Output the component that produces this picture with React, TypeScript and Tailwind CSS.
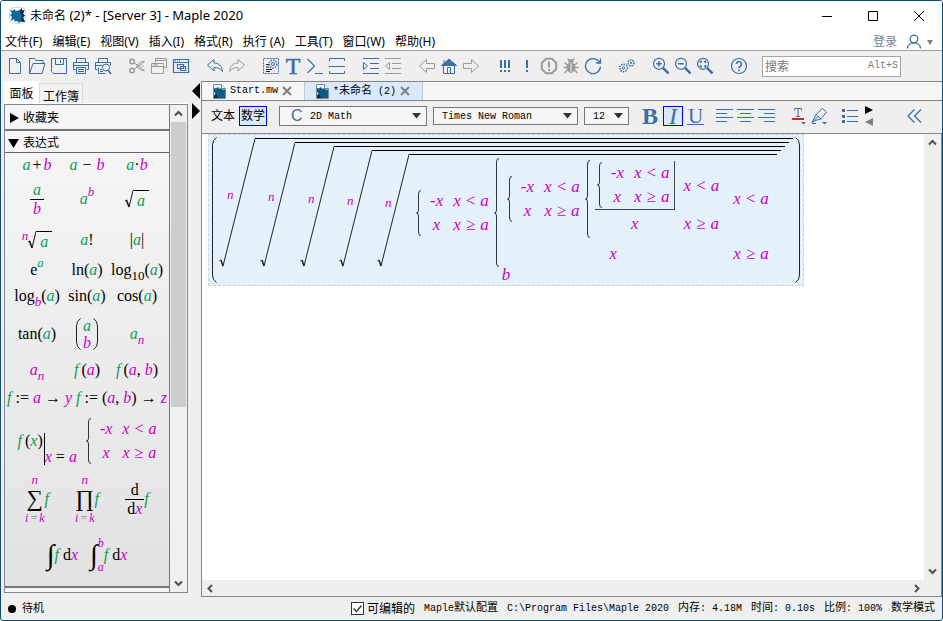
import React, { useState } from "react";
import type { ReactNode } from "react";

const BLUE = "#3a6ea5";
const GRAY = "#9a9a9a";

/* ---------- text helpers ---------- */

// Latin runs are set in a narrow mono face, Chinese runs one size up.
function Song({ children }: { children: string }) {
  return (
    <span className="block font-['Liberation_Mono','Noto_Sans_CJK_SC',monospace] text-[10px] leading-4 whitespace-pre">
      {children.split(/([\u4e00-\u9fff]+)/).map((part, i) =>
        i % 2 ? (
          <span key={i} className="text-[11px]">
            {part}
          </span>
        ) : (
          part
        )
      )}
    </span>
  );
}

const G = ({ children }: { children: ReactNode }) => (
  <i className="text-[#0f9d58]">{children}</i>
);
const M = ({ children }: { children: ReactNode }) => (
  <i className="text-[#c800c8]">{children}</i>
);

/* ---------- icons ---------- */

function Icon({ color = BLUE, children }: { color?: string; children: ReactNode }) {
  return (
    <svg width="18" height="18" viewBox="0 0 18 18" fill="none" stroke={color} strokeWidth="1">
      {children}
    </svg>
  );
}

const NewIcon = () => (
  <Icon>
    <path d="M3.500 1.500h7l4 4v11h-11zM10.500 1.500v4h4" />
  </Icon>
);
const OpenIcon = () => (
  <Icon>
    <path d="M1.500 16.500v-15h5l1.500 2h7v3M1.500 16.500l3.500-10h12l-3 10z" />
  </Icon>
);
const SaveIcon = () => (
  <Icon>
    <path d="M1.500 1.500h15v15h-13l-2-2zM5.500 1.500v6h8v-6M10.500 3v3" />
  </Icon>
);
const PrintIcon = () => (
  <Icon>
    <path d="M4.500 5.500v-4h9v4M3.500 12.500h-2v-7h15v7h-2M1.500 8.500h15M4.500 10.500h9v6h-9zM6 12.500h6M6 14.500h6" />
  </Icon>
);
const PreviewIcon = () => (
  <Icon>
    <path d="M4.500 5.500v-4h9v4M3.500 12.500h-2v-7h15v3M1.500 8.500h7M4.500 10.500v6h7M6 12.500h2M6 14.500h3" />
    <circle cx="12" cy="10.500" r="3.500" />
    <path d="M14.500 13.500l2.500 3.500" strokeWidth="1.600" />
  </Icon>
);
const CutIcon = () => (
  <Icon color={GRAY}>
    <circle cx="4" cy="4.500" r="2.300" strokeWidth="1.400" />
    <circle cx="4" cy="13.500" r="2.300" strokeWidth="1.400" />
    <path d="M6 5.500L16.500 13.500H14L8 9.500M6 12.500L16.500 4.500H14L8 8.500" />
    <path d="M11 9h6" strokeDasharray="1 1" />
  </Icon>
);
const CopyIcon = () => (
  <Icon color={GRAY}>
    <path d="M5.500 5.500v-4h11v9h-3M5.500 3.500h11M1.500 6.500h12v10h-12zM1.500 9.500h12M3 8h5" />
  </Icon>
);
const PasteIcon = () => (
  <Icon>
    <path d="M1.500 2.500h15v13h-15zM1.500 5.500h15M3 4h1M5 4h1M7 4h1M5.500 7.500h6v4h-6zM8.500 9.500h5v4h-5z" strokeWidth="1.200" />
  </Icon>
);
const UndoIcon = () => (
  <Icon>
    <path d="M1.500 8L8 2.500v3.500c5 0 8 3 8.500 8.500-2-3-4.500-4-8.500-4v3.500z" />
  </Icon>
);
const RedoIcon = () => (
  <Icon color={GRAY}>
    <path d="M16.500 8L10 2.500v3.500c-5 0-8 3-8.500 8.500 2-3 4.500-4 8.500-4v3.500z" />
  </Icon>
);
const RegionIcon = () => (
  <Icon>
    <rect x="1.500" y="1.500" width="15" height="15" strokeDasharray="2 1" />
    <circle cx="11" cy="7" r="3.800" strokeDasharray="1.500 1" strokeWidth="1.500" />
    <circle cx="11" cy="7" r="1.500" />
    <path d="M4 7.500h3M4 10h3M4 12.500h6M4 14.500h4" stroke="#222" />
  </Icon>
);
const PromptIcon = () => (
  <Icon>
    <path d="M1.500 2l7 7-7 7M9 16.500h8" strokeWidth="1.200" />
  </Icon>
);
const SectionIcon = () => (
  <Icon>
    <path d="M1.500 4v-2.500h15V4M1 9.500h16M1.500 14v2.500h15V14" />
  </Icon>
);
const IndentIcon = () => (
  <Icon>
    <path d="M1 1.500h16M8 6.500h9M8 11.500h9M1 16.500h16M1.500 5.500v7l4-3.500z" />
  </Icon>
);
const OutdentIcon = () => (
  <Icon color={GRAY}>
    <path d="M1 1.500h16M8 6.500h9M8 11.500h9M1 16.500h16M5.500 5.500v7L1.500 9z" />
  </Icon>
);
const BackIcon = () => (
  <Icon color={GRAY}>
    <path d="M1.500 9L8.500 2.500v4h8v5h-8v4z" />
  </Icon>
);
const ForwardIcon = () => (
  <Icon color={GRAY}>
    <path d="M16.500 9L9.500 2.500v4h-8v5h8v4z" />
  </Icon>
);
const HomeIcon = () => (
  <Icon>
    <path d="M1.500 8.500L9 2l7.500 6.500z" fill={BLUE} />
    <path d="M3.500 8.500v8h11v-8M7.500 16v-5.500h3V16M4 3v3" />
  </Icon>
);
const BangIcon = ({ xs }: { xs: number[] }) => (
  <Icon>
    {xs.map((x) => (
      <path key={x} d={`M${x} 3v8M${x} 13v2`} strokeWidth="2" />
    ))}
  </Icon>
);
const StopIcon = () => (
  <Icon color={GRAY}>
    <path d="M6 1.800h6L16.200 6v6L12 16.200H6L1.800 12V6z" strokeWidth="2" />
    <path d="M9 4.500v6M9 12v2" strokeWidth="2" />
  </Icon>
);
const BugIcon = () => (
  <Icon color={GRAY}>
    <ellipse cx="9" cy="10.500" rx="4" ry="5" fill={GRAY} />
    <path d="M6.500 4.500a2.500 2 0 015 0z" fill={GRAY} />
    <path d="M9 6v9.500" stroke="#efefef" />
    <path d="M5.500 8L2.500 5.500M12.500 8l3-2.500M5 10.500H1.500M13 10.500h3.500M5.500 13l-3 3M12.500 13l3 3M7 3L5.500 1.500M11 3l1.500-1.500" strokeWidth="1.300" />
  </Icon>
);
const RefreshIcon = () => (
  <Icon>
    <path d="M16.500 9.500a7.500 7.500 0 11-2.500-6l2 2M16.500 1.500v4.500h-4.500" strokeWidth="1.300" />
  </Icon>
);
const GearsIcon = () => (
  <Icon>
    <circle cx="5.500" cy="11" r="3.800" strokeDasharray="1.500 1" strokeWidth="1.400" />
    <circle cx="5.500" cy="11" r="1.200" />
    <circle cx="13" cy="6" r="3" strokeDasharray="1.500 1" strokeWidth="1.400" />
    <circle cx="13" cy="6" r=".8" />
  </Icon>
);
const MagnifierIcon = ({ d }: { d: string }) => (
  <Icon>
    <circle cx="7" cy="6.800" r="5.500" strokeWidth="1.200" />
    <path d="M11 10.800l5.500 5.500" strokeWidth="2.500" />
    <path d={d} strokeWidth="1.500" />
  </Icon>
);
const HelpIcon = () => (
  <Icon>
    <circle cx="9" cy="9" r="7.500" strokeWidth="1.200" />
    <path d="M6.500 7a2.500 2.500 0 113.800 2.200C9.300 9.800 9 10 9 11.300M9 12.500v1.800" strokeWidth="1.600" />
  </Icon>
);
const Serif = ({ children }: { children: ReactNode }) => (
  <span className="font-['Liberation_Serif',serif] text-[24px] leading-5 text-[#3a6ea5] [-webkit-text-stroke:0.5px]">
    {children}
  </span>
);

const toolGroups: [string, ReactNode][][] = [
  [
    ["New", <NewIcon />],
    ["Open", <OpenIcon />],
    ["Save", <SaveIcon />],
    ["Print", <PrintIcon />],
    ["Print preview", <PreviewIcon />],
  ],
  [
    ["Cut", <CutIcon />],
    ["Copy", <CopyIcon />],
    ["Paste", <PasteIcon />],
  ],
  [
    ["Undo", <UndoIcon />],
    ["Redo", <RedoIcon />],
  ],
  [
    ["Code edit region", <RegionIcon />],
    ["Text", <Serif>T</Serif>],
    ["Prompt", <PromptIcon />],
    ["Section", <SectionIcon />],
  ],
  [
    ["Indent", <IndentIcon />],
    ["Outdent", <OutdentIcon />],
  ],
  [
    ["Back", <BackIcon />],
    ["Home", <HomeIcon />],
    ["Forward", <ForwardIcon />],
  ],
  [
    ["Execute all", <BangIcon xs={[5, 9, 13]} />],
    ["Execute", <BangIcon xs={[9]} />],
    ["Interrupt", <StopIcon />],
    ["Debug", <BugIcon />],
    ["Restart", <RefreshIcon />],
  ],
  [["Startup code", <GearsIcon />]],
  [
    ["Zoom in", <MagnifierIcon d="M7 4v5.600M4.200 6.800h5.600" />],
    ["Zoom out", <MagnifierIcon d="M4.200 6.800h5.600" />],
    ["Zoom default", <MagnifierIcon d="M4.500 6V4.500H6M8 4.500h1.500V6M9.500 8v1.500H8M6 9.500H4.500V8" />],
  ],
  [["Help", <HelpIcon />]],
];

function MapleLogo() {
  return (
    <svg width="17" height="17" viewBox="0 0 17 17">
      <rect x=".5" y=".5" width="16" height="16" rx="4" fill="#fff" stroke="#d0d6da" />
      <path
        d="M1 3l3 .8L5 2l2 2 2.500-.5L13 1v2.500l2.500-.5L14 7l2 1.500-2 2 2 4.500-4-.5L10 16l-2-2-3 .5.500-2.500L1.500 14 3 10 1 8l2-1.500z"
        fill="#0f6a99"
      />
      <path d="M13 1v2.500l2.500-.5L14 7l2 1.500-2 2 2 4.500-4-.5L13 9l-2-4z" fill="#0a2c45" />
    </svg>
  );
}

function WorksheetIcon() {
  return (
    <svg width="13" height="15" viewBox="0 0 13 15">
      <path d="M.5.500h8l4 4v10H.5z" fill="#eef3f6" stroke="#7d8890" />
      <path d="M8.500.500v4h4" fill="#fff" stroke="#7d8890" />
      <path d="M1 4l2 .5L5 3l1.500 2L8 4l1 1.500h3V14H1v-3l1.500-1.500L1 8z" fill="#0b5b86" />
      <path d="M1 14v-2.500l2.500-1L5 14z" fill="#0a2c45" />
    </svg>
  );
}

function CloseX() {
  return (
    <svg width="10" height="10" viewBox="0 0 10 10" stroke="#808080" strokeWidth="2">
      <path d="M1 1l8 8M9 1L1 9" />
    </svg>
  );
}

function Chevron({ d }: { d: string }) {
  return (
    <svg width="9" height="9" viewBox="0 0 9 9" fill="none" stroke="#505050" strokeWidth="2">
      <path d={d} />
    </svg>
  );
}
const UP = "M1 6.500l3.500-3.500 3.500 3.500";
const DOWN = "M1 2.500l3.500 3.500 3.500-3.500";
const LEFT = "M6 1L2.500 4.500 6 8";
const RIGHT = "M3 1l3.500 3.500L3 8";

/* ---------- math ---------- */

function Brace({ h }: { h: number }) {
  const m = Math.round(h / 2);
  return (
    <svg className="shrink-0" width="5" height={h} fill="none" stroke="#333">
      <path
        d={`M5 .5Q2.500 .5 2.500 4V${m - 3}Q2.500 ${m} .5 ${m}Q2.500 ${m} 2.500 ${m + 3}V${h - 4}Q2.500 ${h - 0.5} 5 ${h - 0.5}`}
      />
    </svg>
  );
}

function Paren({ h, flip = false, r = 8 }: { h: number; flip?: boolean; r?: number }) {
  return (
    <svg className={`shrink-0 ${flip ? "-scale-x-100" : ""}`} width="5" height={h} fill="none" stroke="#222">
      <path d={`M4.500 .5Q.5 3 .5 ${r}V${h - r}Q.5 ${h - 3} 4.500 ${h - 0.5}`} />
    </svg>
  );
}

function Cond({ op }: { op: string }) {
  return (
    <span className="flex gap-[5px] text-[#c800c8]">
      <i>x</i>
      <span>{op}</span>
      <i>a</i>
    </span>
  );
}

function SimplePiecewise() {
  return (
    <span className="flex items-center gap-[9px]">
      <Brace h={46} />
      <span className="grid grid-cols-[auto_auto] justify-items-center gap-x-[10px] leading-6">
        <M>-x</M>
        <Cond op="<" />
        <M>x</M>
        <Cond op="≥" />
      </span>
    </span>
  );
}

// A tall n-th root; each level inside is one pixel narrower and four shorter.
function Root({ level, children }: { level: number; children: ReactNode }) {
  const w = 36 - level;
  const h = 129 - level * 4;
  return (
    <div className="flex">
      <div className="grid shrink-0">
        <svg className="[grid-area:1/1]" width={w} height={h} fill="none" stroke="#222">
          <path d={`M.5 ${h - 6}l1.500 -1`} />
          <path d={`M2 ${h - 7}l2 6`} strokeWidth="1.500" />
          <path d={`M4 ${h - 1}L${w} .5`} />
        </svg>
        <i className="[grid-area:1/1] self-center pb-4 pl-2 text-[13px] leading-4 text-[#c800c8]">n</i>
      </div>
      <div className="border-t border-black pt-[3px] pr-1 pl-[5px]">{children}</div>
    </div>
  );
}

function DocumentExpression() {
  return (
    <div className="flex w-fit gap-[2px] border border-dashed border-[#ccd6de] bg-[#e4f1fb] px-[3px] py-[2px] font-['Liberation_Serif',serif] text-[17px]">
      <Paren h={146} />
      <div className="flex flex-col items-center pt-px">
        <Root level={0}>
          <Root level={1}>
            <Root level={2}>
              <Root level={3}>
                <Root level={4}>
                  <div className="flex items-center gap-[5px] pr-1 pl-[2px]">
                    <SimplePiecewise />
                    <div className="flex items-center gap-2">
                      <Brace h={109} />
                      <div className="grid grid-cols-[auto_auto] items-center justify-items-center gap-x-[14px] gap-y-1 leading-6">
                        <div className="flex items-center gap-[5px]">
                          <SimplePiecewise />
                          <Brace h={78} />
                          <div className="grid grid-cols-[auto_auto] items-center justify-items-center gap-x-[9px] gap-y-[2px]">
                            <div className="border-r border-b border-[#444] pr-1 pl-[2px]">
                              <SimplePiecewise />
                            </div>
                            <Cond op="<" />
                            <M>x</M>
                            <Cond op="≥" />
                          </div>
                        </div>
                        <Cond op="<" />
                        <M>x</M>
                        <Cond op="≥" />
                      </div>
                    </div>
                  </div>
                </Root>
              </Root>
            </Root>
          </Root>
        </Root>
        <span className="leading-4">
          <M>b</M>
        </span>
      </div>
      <Paren h={146} flip />
    </div>
  );
}

function SqrtA({ index }: { index?: string }) {
  return (
    <span className="flex items-end">
      {index && <i className="self-start text-[13px] leading-[10px] text-[#c800c8]">{index}</i>}
      <svg width="8" height="18" fill="none" stroke="#111">
        <path d="M0 11l1.500 -1" />
        <path d="M1.500 10l2.500 7" strokeWidth="1.500" />
        <path d="M4 17L8 .5" />
      </svg>
      <span className="h-[18px] border-t border-black px-1 leading-[19px]">
        <G>a</G>
      </span>
    </span>
  );
}

function BigOp({ sign }: { sign: string }) {
  return (
    <span className="flex items-center">
      <span className="flex flex-col items-center">
        <i className="text-[13px] leading-[13px] text-[#c800c8]">n</i>
        <span className="text-[23px] leading-[26px]">{sign}</span>
        <span className="flex gap-[2px] text-[12px] leading-[13px]">
          <M>i</M>
          <span className="text-[#888]">=</span>
          <M>k</M>
        </span>
      </span>
      <G>f</G>
    </span>
  );
}

const Sub = ({ children }: { children: ReactNode }) => (
  <span className="relative top-[5px] text-[13px]">{children}</span>
);
const Sup = ({ children }: { children: ReactNode }) => (
  <span className="relative -top-2 text-[13px]">{children}</span>
);
// function name with the wider side bearing it gets before a parenthesis
const Fn = () => <i className="mr-[3px] text-[#0f9d58]">f</i>;

const paletteRows: { row: string; cell: string; items: ReactNode[] }[] = [
  {
    row: "h-[23px]",
    cell: "w-[50px]",
    items: [
      <span className="flex gap-[2px]"><G>a</G><span>+</span><M>b</M></span>,
      <span className="flex gap-[5px]"><G>a</G><span>−</span><M>b</M></span>,
      <span><G>a</G>·<M>b</M></span>,
    ],
  },
  {
    row: "h-[46px]",
    cell: "w-[50px]",
    items: [
      <span className="flex w-[14px] flex-col leading-[18px]">
        <span className="border-b border-black"><G>a</G></span>
        <M>b</M>
      </span>,
      <span><G>a</G><Sup><M>b</M></Sup></span>,
      <SqrtA />,
    ],
  },
  {
    row: "h-[35px]",
    cell: "w-[50px]",
    items: [<SqrtA index="n" />, <span><G>a</G>!</span>, <span>|<G>a</G>|</span>],
  },
  {
    row: "h-[25px]",
    cell: "w-[50px]",
    items: [
      <span>e<Sup><G>a</G></Sup></span>,
      <span>ln(<G>a</G>)</span>,
      <span>log<Sub>10</Sub>(<G>a</G>)</span>,
    ],
  },
  {
    row: "h-[28px]",
    cell: "w-[50px]",
    items: [
      <span>log<Sub><M>b</M></Sub>(<G>a</G>)</span>,
      <span>sin(<G>a</G>)</span>,
      <span>cos(<G>a</G>)</span>,
    ],
  },
  {
    row: "h-[48px]",
    cell: "w-[50px]",
    items: [
      <span>tan(<G>a</G>)</span>,
      <span className="flex items-center gap-[2px]">
        <Paren h={32} />
        <span className="flex flex-col leading-[17px]"><G>a</G><M>b</M></span>
        <Paren h={32} flip />
      </span>,
      <span><G>a</G><Sub><M>n</M></Sub></span>,
    ],
  },
  {
    row: "h-[23px]",
    cell: "w-[50px]",
    items: [
      <span><M>a</M><Sub><M>n</M></Sub></span>,
      <span><Fn />(<M>a</M>)</span>,
      <span><Fn />(<M>a</M>, <M>b</M>)</span>,
    ],
  },
  {
    row: "h-[34px] gap-1",
    cell: "",
    items: [
      <span><G>f</G> := <M>a</M> → <M>y</M></span>,
      <span><G>f</G> := (<M>a</M>, <M>b</M>) → <M>z</M></span>,
    ],
  },
  {
    row: "h-[52px] gap-[9px]",
    cell: "",
    items: [
      <span className="flex items-center">
        <span className="pr-px"><Fn />(<G>x</G>)</span>
        <span className="mt-4 flex h-8 items-end border-l border-black">
          <span className="leading-4"><M>x</M> = <M>a</M></span>
        </span>
      </span>,
      <SimplePiecewise />,
    ],
  },
  {
    row: "h-[64px]",
    cell: "w-[50px]",
    items: [
      <BigOp sign="∑" />,
      <BigOp sign="∏" />,
      <span className="flex items-center">
        <span className="flex flex-col items-center leading-[18px]">
          <span className="w-full border-b border-black">d</span>
          <span className="px-[2px]">d<M>x</M></span>
        </span>
        <G>f</G>
      </span>,
    ],
  },
  {
    row: "h-[47px] gap-3",
    cell: "",
    items: [
      <span className="flex items-center"><span className="text-[28px] leading-8">∫</span><G>f</G>&nbsp;d<M>x</M></span>,
      <span className="flex items-center">
        <span className="text-[28px] leading-8">∫</span>
        <span className="flex flex-col justify-between self-stretch text-[12px] leading-[8px]">
          <M>b</M>
          <M>a</M>
        </span>
        <G>f</G>&nbsp;d<M>x</M>
      </span>,
    ],
  },
];

/* ---------- chrome ---------- */

function TitleBar() {
  return (
    <header className="flex h-[29px] shrink-0 items-center bg-white pr-[9px] pl-2">
      <MapleLogo />
      <h1 className="flex-1 pl-1 text-[13px]">
        <span className="text-[12px]">未命名</span> (2)* - [Server 3] - Maple 2020
      </h1>
      <div className="flex gap-3">
        {[
          ["Minimize", "M6 9.500h10"],
          ["Maximize", "M6.500 4.500h9v9h-9z"],
          ["Close", "M6 4l10 10M16 4L6 14"],
        ].map(([label, d]) => (
          <button key={label} aria-label={label} className="w-[34px] pl-[9px]">
            <svg width="22" height="18" fill="none" stroke="#000">
              <path d={d} />
            </svg>
          </button>
        ))}
      </div>
    </header>
  );
}

const menus = ["文件(F)", "编辑(E)", "视图(V)", "插入(I)", "格式(R)", "执行 (A)", "工具(T)", "窗口(W)", "帮助(H)"];

function MenuBar() {
  return (
    <nav className="flex h-[21px] shrink-0 items-center gap-[10px] border-b border-[#a0a0a0] bg-white pt-[3px] pr-[9px] pl-1 text-[12px]">
      {menus.map((m) => (
        <button key={m} className="whitespace-nowrap">
          {m}
        </button>
      ))}
      <button className="ml-auto flex items-center text-[12px] text-[#71879c]">
        登录
        <svg className="ml-2" width="28" height="16" fill="none" stroke={BLUE} strokeWidth="1.300">
          <circle cx="9" cy="5" r="3.800" />
          <path d="M2.500 14.500c0-7.500 13-7.500 13 0" />
          <path d="M22 6h6l-3 5z" fill="#808080" stroke="none" />
        </svg>
      </button>
    </nav>
  );
}

function Toolbar() {
  return (
    <div className="flex h-[30px] shrink-0 items-center gap-3 pl-[3px]">
      {toolGroups.map((group, i) => (
        <div key={i} className="flex">
          {group.map(([label, icon]) => (
            <button key={label} aria-label={label} className="flex h-6 w-[22px] items-center justify-center">
              {icon}
            </button>
          ))}
        </div>
      ))}
      <label className="flex h-[21px] w-[139px] items-center border border-[#a5a5a5] bg-white px-[2px]">
        <input
          aria-label="搜索"
          placeholder="搜索"
          className="min-w-0 flex-1 pt-[2px] text-[12px] outline-none placeholder:text-[#777]"
        />
        <span className="text-[#777]">
          <Song>Alt+S</Song>
        </span>
      </label>
    </div>
  );
}

function Palettes() {
  return (
    <aside className="flex w-[187px] shrink-0 flex-col pb-1 pl-[3px]">
      <div className="flex shrink-0 items-end text-[12px]">
        <button className="h-[22px] w-[35px] bg-white pt-1">面板</button>
        <button className="h-5 w-11 border border-b-0 border-[#d9d9d9] bg-[#f3f3f3] pt-1 text-[12px]">工作簿</button>
      </div>
      <div className="h-px bg-white" />
      <div className="flex min-h-0 flex-1 border border-[#828790] bg-[#f0f0f0]">
        <div className="flex min-w-0 flex-1 flex-col border-r border-[#777]">
          <button className="flex h-[26px] shrink-0 items-center gap-1 border-b-2 border-[#777] bg-[#f6f6f6] pt-[2px] pl-1 text-[12px]">
            <svg width="10" height="12">
              <path d="M1 1v10l9-5z" />
            </svg>
            收藏夹
          </button>
          <button className="flex h-[22px] shrink-0 items-center gap-1 border-b border-[#666] bg-[#f6f6f6] pt-[3px] pl-[3px] text-[12px]">
            <svg width="11" height="10">
              <path d="M0 1h11L5.500 10z" />
            </svg>
            表达式
          </button>
          <div className="flex-1 overflow-hidden bg-linear-to-b from-[#f5f5f5] to-[#e2e2e2] font-['Liberation_Serif',serif] text-[16px]">
            {paletteRows.map(({ row, cell, items }, i) => (
              <div key={i} className={`flex items-center justify-center ${row}`}>
                {items.map((item, j) => (
                  <button key={j} className={`flex justify-center whitespace-nowrap ${cell}`}>
                    {item}
                  </button>
                ))}
              </div>
            ))}
          </div>
          <div className="h-[6px] shrink-0 border-t-2 border-[#777] bg-[#f6f6f6]" />
        </div>
        <div className="flex w-[17px] flex-col items-center">
          <button aria-label="Scroll up" className="flex h-[17px] items-center">
            <Chevron d={UP} />
          </button>
          <div className="flex w-full flex-1 flex-col pr-px pl-px">
            <div className="basis-[63%] bg-[#cdcdcd]" />
          </div>
          <button aria-label="Scroll down" className="flex h-[17px] items-center">
            <Chevron d={DOWN} />
          </button>
        </div>
      </div>
    </aside>
  );
}

function Splitter() {
  return (
    <div className="flex w-[13px] shrink-0 flex-col items-end gap-1 pt-[2px] pr-px">
      <button aria-label="Collapse palettes">
        <svg width="8" height="16">
          <path d="M8 0v16L0 8z" />
        </svg>
      </button>
      <button aria-label="Expand palettes">
        <svg width="8" height="16">
          <path d="M0 0v16l8-8z" />
        </svg>
      </button>
    </div>
  );
}

function Combo({ label, value, className, children }: { label: string; value: string; className: string; children?: ReactNode }) {
  return (
    <label className={`flex items-center border border-[#777] bg-[#f6f6f6] pr-[5px] pl-2 ${className}`}>
      {children}
      <select
        aria-label={label}
        defaultValue={value}
        className="min-w-0 flex-1 appearance-none font-['Liberation_Mono',monospace] text-[10px] outline-none"
      >
        <option>{value}</option>
      </select>
      <svg width="9" height="6" fill="#333">
        <path d="M0 0h9L4.500 5.500z" />
      </svg>
    </label>
  );
}

function AlignButton({ label, d }: { label: string; d: string }) {
  return (
    <button aria-label={label} className="w-[21px]">
      <svg width="17" height="16" stroke={BLUE}>
        <path d={d} />
      </svg>
    </button>
  );
}

function FormatBar() {
  const [italic, setItalic] = useState(true);
  return (
    <div className="flex h-8 shrink-0 items-center pr-5 pb-[2px] pl-[9px] text-[12px]">
      <button className="w-7 text-left">文本</button>
      <button className="mr-3 h-5 w-7 border border-[#0000ff] bg-[#d9e8fb]">数学</button>
      <Combo label="Style" value="2D Math" className="mr-1.5 h-5 w-[148px]">
        <span className="w-[22px] pl-[3px] font-['Liberation_Sans',sans-serif] text-[16px] text-[#3a6ea5]">C</span>
      </Combo>
      <Combo label="Font" value="Times New Roman" className="mr-1.5 h-[18px] w-[145px]" />
      <Combo label="Size" value="12" className="mr-3 h-[18px] w-[45px]" />
      <div className="mr-3 flex items-center gap-1 font-['Liberation_Serif',serif] text-[24px] leading-[18px] text-[#3a6ea5]">
        <button aria-label="Bold" className="w-[18px] font-bold">B</button>
        <button
          aria-label="Italic"
          aria-pressed={italic}
          onClick={() => setItalic(!italic)}
          className={`h-5 w-5 italic ${italic ? "border border-[#0000ff] bg-[#d9e8fb]" : ""}`}
        >
          I
        </button>
        <button aria-label="Underline" className="h-[18px] w-[17px] border-b border-[#3a6ea5] text-[21px] leading-4">
          U
        </button>
      </div>
      <AlignButton label="Align left" d="M0 1.500h17M0 5.500h11M0 9.500h17M0 13.500h11" />
      <AlignButton label="Align center" d="M0 1.500h17M3 5.500h11M0 9.500h17M3 13.500h11" />
      <AlignButton label="Align right" d="M0 1.500h17M6 5.500h11M0 9.500h17M6 13.500h11" />
      <button aria-label="Text color" className="ml-3 flex w-5">
        <svg width="16" height="18" fill="none" stroke={BLUE}>
          <path d="M3.500 3.500v-2h7v2M7 1.500v8M5 9.500h4" />
          <path d="M1 12h12" stroke="#f01818" strokeWidth="2" />
          <path d="M10 15h5l-2.500 2.500z" fill={BLUE} stroke="none" />
        </svg>
      </button>
      <button aria-label="Highlight" className="mr-3 flex w-[18px]">
        <svg width="17" height="18" fill="none" stroke={BLUE}>
          <path d="M1 15.500l4-8L11.500 1.500l4 3.500L10 12l-6 1.500zM5 7.500L10 12M1 15.500l6-6M1 16.500h4" />
          <path d="M11 15h5l-2.500 2.500z" fill={BLUE} stroke="none" />
        </svg>
      </button>
      <button aria-label="Bullets">
        <svg width="18" height="16" stroke={BLUE}>
          <path d="M6 2.500h11M6 8.500h11M6 13.500h11" />
          <path d="M1 2.500h3M1 8.500h3M1 13.500h3" strokeWidth="3" />
        </svg>
      </button>
      <div className="ml-1.5 flex flex-col gap-1">
        <button aria-label="More">
          <svg width="8" height="8" className="block">
            <path d="M0 0v8l8-4z" />
          </svg>
        </button>
        <button aria-label="Less">
          <svg width="8" height="8" className="block" fill="#808080">
            <path d="M8 0v8L0 4z" />
          </svg>
        </button>
      </div>
      <button aria-label="Collapse toolbar" className="ml-auto">
        <svg width="15" height="16" fill="none" stroke={BLUE} strokeWidth="1.300">
          <path d="M7.500 1.500L1 8l6.500 6.500M14 1.500L7.500 8l6.500 6.500" />
        </svg>
      </button>
    </div>
  );
}

function TabStrip() {
  return (
    <div className="flex h-5 shrink-0 border-y border-[#828282] bg-[#f6f6f6]">
      {[
        { title: "Start.mw", active: false },
        { title: "*未命名 (2)", active: true },
      ].map(({ title, active }) => (
        <div
          key={title}
          className={`flex items-center gap-1 border-r border-[#c3c9d0] pr-3 pl-[11px] ${active ? "bg-[#d9e8fb]" : ""}`}
        >
          <WorksheetIcon />
          <button>
            <Song>{title}</Song>
          </button>
          <button aria-label={`Close ${title}`}>
            <CloseX />
          </button>
        </div>
      ))}
    </div>
  );
}

function StatusBar() {
  const [editable, setEditable] = useState(true);
  return (
    <footer className="flex h-[23px] shrink-0 items-center gap-[9px] pr-[7px] pl-[7px] text-[12px] whitespace-nowrap">
      <span className="mr-auto flex items-center gap-[6px] text-[11px]">
        <span className="size-2 rounded-full bg-black" />
        待机
      </span>
      <label className="flex items-center gap-[3px]">
        <span className="grid size-[13px] [&>*]:[grid-area:1/1]">
          <input
            type="checkbox"
            checked={editable}
            onChange={(e) => setEditable(e.target.checked)}
            className="size-[13px] appearance-none border border-[#333] bg-white"
          />
          {editable && (
            <svg className="pointer-events-none" width="13" height="13" fill="none" stroke="#333" strokeWidth="1.300">
              <path d="M2.500 6.500l3 3 5-6" />
            </svg>
          )}
        </span>
        可编辑的
      </label>
      {["Maple默认配置", "C:\\Program Files\\Maple 2020", "内存: 4.18M", "时间: 0.10s", "比例: 100%", "数学模式"].map((t) => (
        <Song key={t}>{t}</Song>
      ))}
    </footer>
  );
}

export default function App() {
  return (
    <div className="flex h-screen flex-col overflow-hidden rounded-[3px] border border-[#134b6b] bg-[#efefef] font-['Noto_Sans','Noto_Sans_CJK_SC',sans-serif] text-black">
      <TitleBar />
      <MenuBar />
      <Toolbar />
      <div className="flex min-h-0 flex-1">
        <Palettes />
        <Splitter />
        <main className="flex min-w-0 flex-1 flex-col border-l border-[#828790]">
          <TabStrip />
          <FormatBar />
          <div className="flex min-h-0 flex-1 flex-col border-y border-r border-[#828790]">
            <div className="flex min-h-0 flex-1">
              <div className="min-w-0 flex-1 overflow-hidden bg-white pl-[6px]">
                <DocumentExpression />
              </div>
              <div className="flex w-[17px] flex-col items-center justify-between pt-1 pb-1">
                <button aria-label="Scroll up">
                  <Chevron d={UP} />
                </button>
                <button aria-label="Scroll down">
                  <Chevron d={DOWN} />
                </button>
              </div>
            </div>
            <div className="flex h-4 items-center justify-between pr-5 pl-1">
              <button aria-label="Scroll left">
                <Chevron d={LEFT} />
              </button>
              <button aria-label="Scroll right">
                <Chevron d={RIGHT} />
              </button>
            </div>
          </div>
        </main>
      </div>
      <StatusBar />
    </div>
  );
}
